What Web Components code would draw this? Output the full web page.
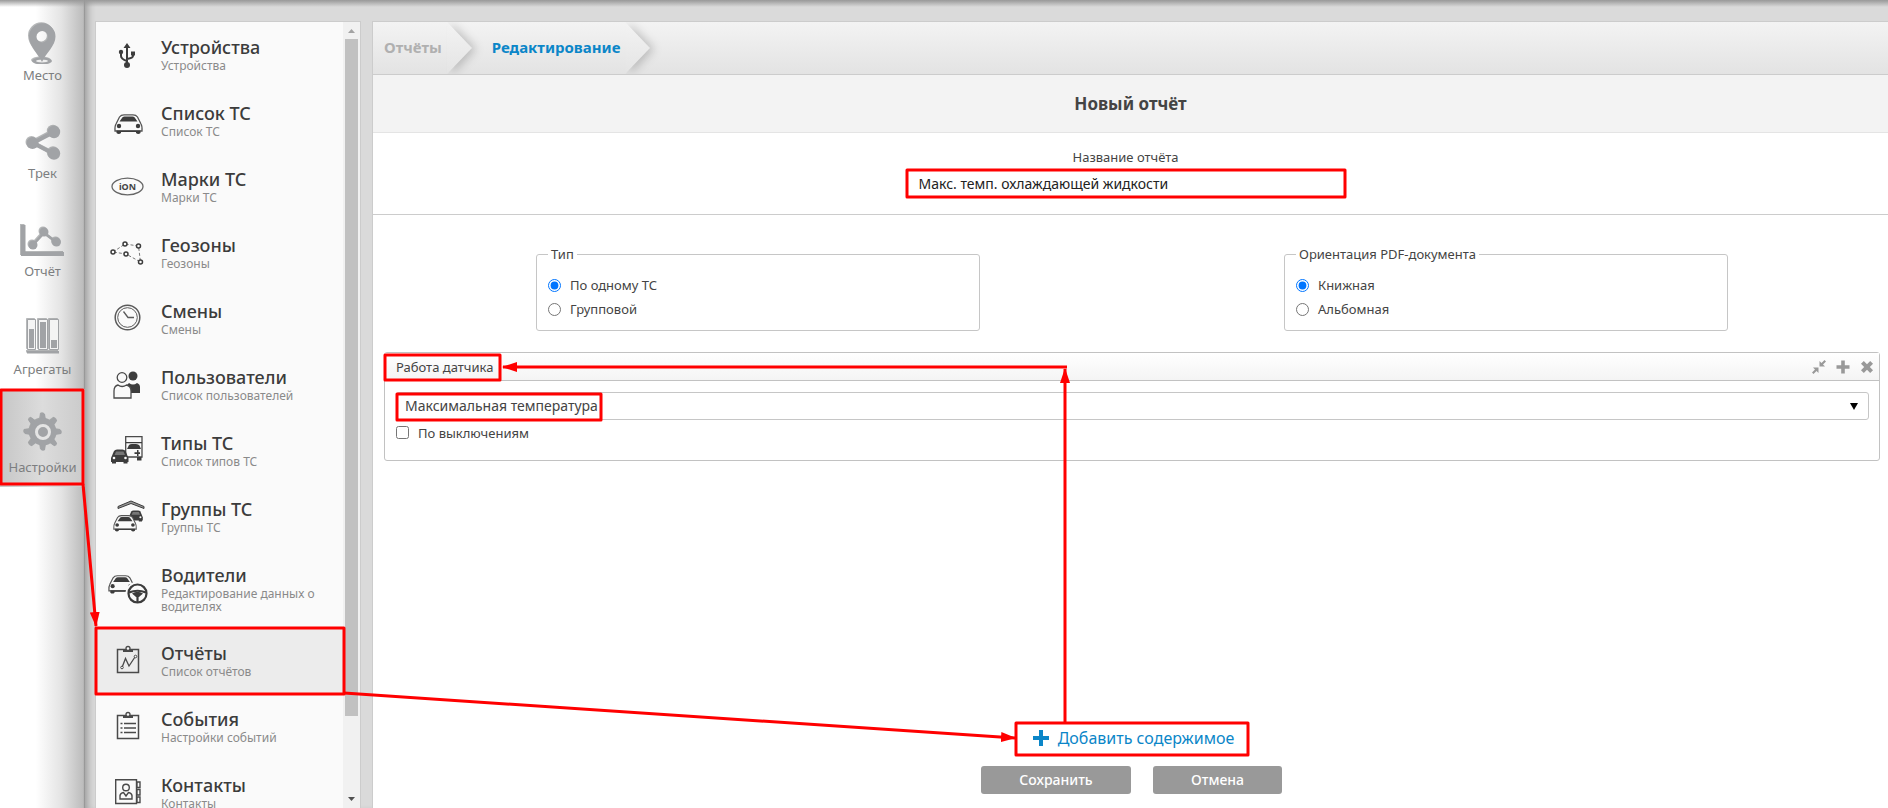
<!DOCTYPE html>
<html lang="ru">
<head>
<meta charset="utf-8">
<title>Новый отчёт</title>
<style>
  html, body { height: 100%; }
  body { margin: 0; font: 13px/18px "Noto Sans", "Open Sans", sans-serif; color: #444; }
</style>
</head>
<body>
<app-shell>
  <app-rail slot="rail">
    <rail-item icon="place">Место</rail-item>
    <rail-item icon="track">Трек</rail-item>
    <rail-item icon="chart">Отчёт</rail-item>
    <rail-item icon="units">Агрегаты</rail-item>
    <rail-item icon="gear" active>Настройки</rail-item>
  </app-rail>
  <side-menu slot="menu">
    <side-item icon="usb">Устройства<span slot="note">Устройства</span></side-item>
    <side-item icon="car">Список ТС<span slot="note">Список ТС</span></side-item>
    <side-item icon="brand">Марки ТС<span slot="note">Марки ТС</span></side-item>
    <side-item icon="geo">Геозоны<span slot="note">Геозоны</span></side-item>
    <side-item icon="clock">Смены<span slot="note">Смены</span></side-item>
    <side-item icon="users">Пользователи<span slot="note">Список пользователей</span></side-item>
    <side-item icon="types">Типы ТС<span slot="note">Список типов ТС</span></side-item>
    <side-item icon="groups">Группы ТС<span slot="note">Группы ТС</span></side-item>
    <side-item icon="drivers">Водители<span slot="note">Редактирование данных о водителях</span></side-item>
    <side-item icon="reports" active>Отчёты<span slot="note">Список отчётов</span></side-item>
    <side-item icon="events">События<span slot="note">Настройки событий</span></side-item>
    <side-item icon="contacts">Контакты<span slot="note">Контакты</span></side-item>
  </side-menu>
  <report-editor>
    <crumb-item slot="crumbs">Отчёты</crumb-item>
    <crumb-item slot="crumbs" current>Редактирование</crumb-item>
    <radio-group slot="options" name="kind" legend="Тип" options="По одному ТС|Групповой"></radio-group>
    <radio-group slot="options" name="page" legend="Ориентация PDF-документа" options="Книжная|Альбомная"></radio-group>
    <content-block slot="blocks">Работа датчика</content-block>
  </report-editor>
  <guide-marks slot="guide"></guide-marks>
</app-shell>

<script>
// A front-view car, drawn in a 29 x 20 box.
const car = '<path d="M2 10 5.500 3 Q7 .8 10 .8H19Q22 .8 23.500 3L27 10Q28.300 12 28 17H1Q.7 12 2 10Z" fill="#fafafa" stroke="#555" stroke-width="1.300"/><path d="M5.500 7.500 8.500 3.200Q9.200 2.400 10.500 2.400H18.500Q19.800 2.400 20.500 3.200L23.500 7.500Z" fill="#3c3c3c"/><circle cx="5" cy="12" r="2.200" fill="#3c3c3c"/><circle cx="24" cy="12" r="2.200" fill="#3c3c3c"/><path d="M2.500 16.500H7V19Q4.800 20.800 2.500 19ZM22 16.500H26.500V19Q24.200 20.800 22 19ZM4 16.500H25V18H4Z" fill="#3c3c3c"/>';
const darkCar = '<path d="M1 9 4 2Q5 .5 7 .5H12.500Q14.500 .5 15.500 2L18.500 9V13H1Z" fill="#3c3c3c"/><path d="M4.500 6 6 2.500H13.500L15 6Z" fill="#777"/><circle cx="4" cy="9" r="1.300" fill="#fafafa"/><circle cx="15.500" cy="9" r="1.300" fill="#fafafa"/><path d="M2 12H6V14.500H2ZM13.500 12H17.500V14.500H13.500Z" fill="#3c3c3c"/>';
const clip = '<path d="M11.500 15.500H32.500V38.500H11.500Z" fill="none" stroke="#4a4a4a" stroke-width="1.500"/><path d="M17 15H27V18H17Z" fill="#4a4a4a"/><circle cx="22" cy="14.500" r="2" fill="#fafafa" stroke="#4a4a4a" stroke-width="1.300"/>';
const toothed = Array.from({ length: 8 }, (_, i) => `<path d="M-3-12 -2-18Q0-19.500 2-18L3-12Z" transform="rotate(${i * 45})"/>`).join('');

const RAIL_ICONS = {
  place: '<g transform="translate(0 3)"><ellipse cx="21" cy="38" rx="10" ry="3.500" fill="#a1a3a6"/><ellipse cx="21" cy="38" rx="6" ry="1.500" fill="#eee"/><path fill-rule="evenodd" d="M21 39C17 30 8 23 8 13.500A13.200 13.200 0 0 1 34.500 13.500C34.500 23 25 30 21 39ZM21.200 8A5.700 5.700 0 1 0 21.200 19.400 5.700 5.700 0 0 0 21.200 8Z"/></g>',
  track: '<g transform="translate(0 3)"><path d="M12 22 33 11M12 22 33 33" fill="none" stroke="#a1a3a6" stroke-width="4"/><circle cx="11.500" cy="22" r="6"/><circle cx="33" cy="11" r="6.200"/><circle cx="33" cy="32.500" r="6.200"/></g>',
  chart: '<g transform="translate(0 2)"><path d="M0 7H4.500V34H43V38H0Z"/><path d="M12 27 23 15 35 24" fill="none" stroke="#a1a3a6" stroke-width="2.500"/><circle cx="12" cy="27" r="4.500"/><circle cx="23" cy="14" r="4.500"/><circle cx="35.500" cy="24" r="4.500"/></g>',
  units: '<g fill="#f4f4f4" stroke="#a1a3a6" stroke-width="1"><path d="M6.500 5.500H14.500V35.500H6.500ZM17.500 5.500H26.500V35.500H17.500ZM28.500 5.500H37.500V35.500H28.500Z"/></g><path d="M8 15H13V34H8ZM19 8H25V34H19ZM30 26H36V34H30ZM6 37H38V39.500H6Z"/>',
  gear: `<g transform="translate(22 20)">${toothed}<circle r="13.500"/><circle r="6.500" fill="none" stroke="#e4e4e4" stroke-width="3"/></g>`
};

const MENU_ICONS = {
  usb: '<g fill="none" stroke="#3c3c3c" stroke-width="2"><path d="M21 18V36M15 25V28Q15 31 21 33M27 25V28Q27 30 21 31"/></g><path d="M21 15 24.500 20H17.500ZM25 23.500H29V27.500H25Z" fill="#3c3c3c"/><circle cx="15" cy="24" r="2.200" fill="#3c3c3c"/><circle cx="21" cy="37" r="3" fill="#3c3c3c"/>',
  car: `<g transform="translate(8 20)">${car}</g>`,
  brand: '<ellipse cx="21.500" cy="26.500" rx="15.500" ry="8.300" fill="none" stroke="#666" stroke-width="1.300"/><text x="21.500" y="30" text-anchor="middle" font-size="9" font-weight="700" fill="#444">iON</text>',
  geo: '<path d="M7 26 19 18 32.500 20 34.500 36 20 28Z" fill="none" stroke="#777" stroke-width="1" stroke-dasharray="3 2"/><g fill="#fafafa" stroke="#3c3c3c" stroke-width="1.500"><circle cx="7" cy="26" r="2"/><circle cx="19" cy="18" r="2"/><circle cx="32.500" cy="20" r="2"/><circle cx="20" cy="28" r="2"/><circle cx="34.500" cy="36" r="2"/></g>',
  clock: '<g fill="none" stroke="#5a5a5a"><circle cx="21.500" cy="25.500" r="12.300" stroke-width="1.500"/><circle cx="21.500" cy="25.500" r="9.800"/><path d="M17.500 19.500 22 25.500H28" stroke-width="1.300"/></g>',
  users: '<circle cx="27" cy="18" r="4.500" fill="#3c3c3c"/><path d="M23 25Q27 28 31 25Q34 26 34 29V35H21V27Z" fill="#3c3c3c"/><circle cx="16" cy="19.500" r="4.800" fill="#fafafa" stroke="#4a4a4a" stroke-width="1.300"/><path d="M8 40V33Q8 28 12 27Q16 30 20.500 27Q25 28 25 33V40Z" fill="#fafafa" stroke="#4a4a4a" stroke-width="1.300"/>',
  types: `<path d="M19.700 12.700H36V33H19.700Z" fill="#fafafa" stroke="#4a4a4a" stroke-width="1.300"/><path d="M20 18H36V19.200H20ZM21 25 23 21Q24 20 26 20H30Q32.500 20 33.500 21.500L35 25ZM28.500 28.200H31V26H32.500V28.200H34V30H32.500V32H31V30H28.500ZM31 33H35.500V36.500H31Z" fill="#3c3c3c"/><g transform="translate(4 25)">${darkCar}</g>`,
  groups: `<path d="M12 16.500 25 11 38 16.500V18.500L25 13.500 12 18.500Z" fill="#999" stroke="#3c3c3c"/><g transform="translate(22 20) scale(.8)">${darkCar}</g><g transform="translate(7 25) scale(.83)">${car}</g>`,
  drivers: `<g transform="translate(2 19) scale(.93)">${car}</g><circle cx="31.500" cy="37.500" r="12" fill="#fafafa"/><g fill="none" stroke="#3c3c3c" stroke-width="2.200"><circle cx="31.500" cy="37.500" r="9"/><path d="M23 36.500Q31.500 33 40 36.500M31.500 37V46"/></g><path d="M26 37.500Q31.500 34 37 37.500L33 41H30Z" fill="#3c3c3c"/>`,
  reports: clip + '<path d="M16 33.500 19.500 24.500 23 32 29 23" fill="none" stroke="#4a4a4a" stroke-width="1.300"/><g fill="#fafafa" stroke="#4a4a4a"><circle cx="16" cy="33.500" r="1.300"/><circle cx="29.500" cy="22.500" r="1.300"/></g>',
  events: clip + '<path d="M14.500 23.500H16.500M18 23.500H30M14.500 28H16.500M18 28H30M14.500 32.500H16.500M18 32.500H30" stroke="#4a4a4a" stroke-width="1.300"/>',
  contacts: '<g fill="none" stroke="#4a4a4a" stroke-width="1.400"><path d="M9.700 13.700H30.500V37.500H9.700ZM31 16H34V21.500H31ZM31 23.500H34V29H31ZM31 31H34V36.500H31Z"/><circle cx="20" cy="21.500" r="3.300"/><path d="M14 33V29.500Q14.500 27 17.500 26.500L20 30 22.500 26.500Q25.500 27 26 29.500V33Z"/></g>'
};

function element(name, markup, setup) {
  const template = document.createElement('template');
  template.innerHTML = markup;
  customElements.define(name, class extends HTMLElement {
    constructor() {
      super();
      this.attachShadow({ mode: 'open' }).append(template.content.cloneNode(true));
    }
    connectedCallback() { if (setup) setup(this, this.shadowRoot); }
  });
}

element('app-shell', `
<style>
  :host { display: flex; position: relative; height: 100vh; overflow: hidden; background: #dadada; }
  .shade { position: absolute; inset: 0 0 auto; height: 7px; background: linear-gradient(#999, #9990); }
  .work { flex: 1; min-width: 0; display: flex; gap: 11px; padding: 21px 0 0 10px; box-shadow: inset 8px 0 8px -6px #0005; }
  ::slotted(report-editor) { flex: 1; min-width: 0; }
</style>
<slot name="rail"></slot>
<div class="work"><slot name="menu"></slot><slot></slot></div>
<div class="shade"></div>
<slot name="guide"></slot>`);

element('app-rail', `
<style>
  :host { display: block; flex: none; width: 85px; background: linear-gradient(90deg, #fff 42%, #e4e4e4 72%, #bcbcbc 98%, #8a8a8a); }
</style>
<nav><slot></slot></nav>`);

element('rail-item', `
<style>
  :host { display: block; color: #7c7e80; }
  :host(:first-child) a { height: 95px; }
  a { display: flex; flex-direction: column; align-items: center; justify-content: flex-end; gap: 2px; box-sizing: border-box; height: 98px; padding-bottom: 11px; color: inherit; text-decoration: none; }
  :host([active]) { background: linear-gradient(90deg, #c6c6c6, #dcdcdc 50%, #cacaca); }
  svg { fill: #a1a3a6; filter: drop-shadow(-1px -1px 0 #77797c88); }
</style>
<a href="#"><svg width="44" height="44" viewBox="0 0 44 44" aria-hidden="true"></svg><span><slot></slot></span></a>`,
(host, root) => { root.querySelector('svg').innerHTML = RAIL_ICONS[host.getAttribute('icon')]; });

element('side-menu', `
<style>
  :host { display: flex; box-sizing: border-box; flex: none; width: 266px; border: 1px solid #ccc; border-bottom: 0; background: #fafafa; overflow: hidden; }
  nav { flex: 1; }
  .bar { display: flex; flex-direction: column; align-items: center; width: 17px; background: #f1f1f1; }
  .track { flex: 1; width: 13px; }
  .thumb { height: 90%; background: #c1c1c1; }
</style>
<nav><slot></slot></nav>
<div class="bar" aria-hidden="true">
  <svg width="17" height="17"><path d="M5 11 8.500 7 12 11Z" fill="#a3a3a3"/></svg>
  <div class="track"><div class="thumb"></div></div>
  <svg width="17" height="17"><path d="M5 6 8.500 10 12 6Z" fill="#505050"/></svg>
</div>`);

element('side-item', `
<style>
  :host { display: block; }
  :host([active]) { background: #ececec; }
  a { display: flex; gap: 13px; box-sizing: border-box; min-height: 66px; padding: 0 16px 0 10px; color: #3c3c3c; text-decoration: none; }
  svg { flex: none; margin-top: 6px; }
  .text { padding: 13px 0 15px; }
  .title { font-size: 18px; line-height: 24px; font-weight: 500; }
  .note { font-size: 12px; line-height: 13px; color: #8a8a8a; }
</style>
<a href="#"><svg width="42" height="54" viewBox="0 0 42 54" aria-hidden="true"></svg>
<div class="text"><div class="title"><slot></slot></div><div class="note"><slot name="note"></slot></div></div></a>`,
(host, root) => { root.querySelector('svg').innerHTML = MENU_ICONS[host.getAttribute('icon')]; });

element('crumb-item', `
<style>
  :host { display: flex; color: #b0b0b0; font-size: 15px; font-weight: 700; }
  :host([current]) { color: #0b86c8; }
  a { display: flex; align-items: center; padding: 0 5px 2px 11px; color: inherit; text-decoration: none; }
  :host([current]) a { padding-left: 19px; }
  svg { overflow: visible; filter: drop-shadow(4px 1px 5px #0003); clip-path: inset(0 -16px 0 0); }
</style>
<a href="#"><slot></slot></a>
<svg width="26" height="52" viewBox="0 0 26 52" aria-hidden="true"><defs><linearGradient id="g" x2="0" y2="1"><stop stop-color="#f3f3f3"/><stop offset="1" stop-color="#e4e4e4"/></linearGradient></defs><path d="M0 0 25 26 0 52Z" fill="url(#g)"/></svg>`);

element('radio-group', `
<style>
  :host { display: block; width: 444px; }
  fieldset { margin: 0; padding: 10px 11px 9px; border: 1px solid #c6c6c6; border-radius: 3px; }
  legend { padding: 0 3px; }
  label { display: flex; align-items: center; gap: 9px; width: max-content; height: 24px; }
  input { width: 13px; height: 13px; margin: 0; accent-color: #0075ff; }
</style>
<fieldset><legend></legend></fieldset>`,
(host, root) => {
  root.querySelector('legend').textContent = host.getAttribute('legend');
  host.getAttribute('options').split('|').forEach((text, i) => {
    const label = document.createElement('label');
    const input = document.createElement('input');
    input.type = 'radio';
    input.name = host.getAttribute('name');
    input.checked = i === 0;
    label.append(input, text);
    root.querySelector('fieldset').append(label);
  });
});

element('content-block', `
<style>
  :host { display: block; border: 1px solid #c2c2c2; border-radius: 3px; }
  header { display: flex; align-items: center; justify-content: space-between; height: 27px; padding: 0 4px 0 11px; border-bottom: 1px solid #c2c2c2; background: linear-gradient(#fff, #f4f4f4); }
  .tools { display: flex; gap: 8px; }
  button { display: flex; padding: 0; border: 0; background: none; }
  .body { padding: 11px 10px 15px 11px; }
  .pick { display: grid; align-items: center; }
  select, .pick svg { grid-area: 1 / 1; }
  .pick svg { justify-self: end; margin-right: 10px; pointer-events: none; }
  select { appearance: none; width: 100%; height: 28px; padding: 0 8px; border: 1px solid #c6c6c6; border-radius: 3px; background: #fff; color: #444; font: inherit; font-size: 14px; }
  label { display: flex; align-items: center; gap: 9px; width: max-content; height: 25px; }
  input { width: 13px; height: 13px; margin: 0; }
</style>
<header><span><slot></slot></span>
<div class="tools">
  <button type="button" aria-label="Свернуть"><svg width="16" height="16" viewBox="0 0 16 16" fill="#999"><path d="M8.500 7.500V2L10.500 4 13.500 1 15 2.500 12 5.500 14 7.500ZM7.500 8.500V14L5.500 12 2.500 15 1 13.500 4 10.500 2 8.500Z"/></svg></button>
  <button type="button" aria-label="Добавить"><svg width="16" height="16" viewBox="0 0 16 16" fill="#999"><path d="M6.200 1.500H9.800V6.200H14.500V9.800H9.800V14.500H6.200V9.800H1.500V6.200H6.200Z"/></svg></button>
  <button type="button" aria-label="Удалить"><svg width="16" height="16" viewBox="0 0 16 16" fill="#999"><path transform="rotate(45 8 8)" d="M6 1.500H10V6H14.500V10H10V14.500H6V10H1.500V6H6Z"/></svg></button>
</div></header>
<div class="body">
  <div class="pick"><select aria-label="Показатель"><option>Максимальная температура</option></select><svg width="10" height="8"><path d="M1 1H9L5 8Z"/></svg></div>
  <label><input type="checkbox">По выключениям</label>
</div>`);

element('report-editor', `
<style>
  :host { display: flex; flex-direction: column; box-sizing: border-box; border: solid #ccc; border-width: 1px 0 0 1px; background: #fff; }
  .crumbs { display: flex; height: 52px; border-bottom: 1px solid #ccc; background: linear-gradient(#f3f3f3, #e3e3e3); }
  h1 { margin: 0; padding: 17px 0 16px; border-bottom: 1px solid #e4e4e4; background: #f3f3f3; text-align: center; font-size: 17px; line-height: 24px; }
  .name { display: flex; flex-direction: column; align-items: center; padding: 14px 10px 16px 0; border-bottom: 1px solid #ccc; }
  .name label { line-height: 20px; }
  .name input { box-sizing: border-box; width: 438px; height: 29px; margin-top: 2px; padding: 0 11px; border: 1px solid #c6c6c6; color: #222; font: inherit; font-size: 14px; }
  .options { display: flex; justify-content: space-around; padding: 30px 8px 21px 11px; }
  .blocks { padding: 0 8px 0 11px; }
  footer { display: flex; flex-direction: column; align-items: center; gap: 11px; margin-top: auto; padding: 0 0 14px 2px; }
  button { border: 0; font: inherit; }
  .add { display: flex; align-items: center; gap: 9px; height: 34px; padding: 0 0 0 4px; background: none; color: #0b86c8; font-size: 16px; }
  .row { display: flex; gap: 22px; }
  .row button { height: 28px; border-radius: 3px; background: #999; color: #fff; font-size: 14px; font-weight: 500; }
  .save { width: 150px; }
  .cancel { width: 129px; }
</style>
<nav class="crumbs"><slot name="crumbs"></slot></nav>
<h1>Новый отчёт</h1>
<div class="name"><label for="title">Название отчёта</label><input id="title" type="text" value="Макс. темп. охлаждающей жидкости"></div>
<div class="options"><slot name="options"></slot></div>
<div class="blocks"><slot name="blocks"></slot></div>
<footer>
  <button class="add" type="button"><svg width="16" height="16" viewBox="0 0 16 16" fill="#0b86c8" aria-hidden="true"><path d="M6 0H10V6H16V10H10V16H6V10H0V6H6Z"/></svg>Добавить содержимое</button>
  <div class="row"><button class="save" type="button">Сохранить</button><button class="cancel" type="button">Отмена</button></div>
</footer>`);

// Red frames and arrows that lead the reader from step to step.
element('guide-marks', `
<style>
  :host { position: absolute; inset: 0; pointer-events: none; }
  svg { display: block; width: 100%; height: 100%; }
</style>
<svg aria-hidden="true">
  <defs><marker id="tip" viewBox="0 0 15 10" refX="14" refY="5" markerWidth="15" markerHeight="10" markerUnits="userSpaceOnUse" orient="auto"><path d="M0 0 15 5 0 10Z" fill="red"/></marker></defs>
  <g fill="none" stroke="red" stroke-width="3" stroke-linejoin="round">
    <rect x="1" y="390" width="82" height="94"/>
    <rect x="96" y="628" width="248" height="66"/>
    <rect x="907" y="170" width="438" height="27"/>
    <rect x="385" y="355" width="115" height="25"/>
    <rect x="397" y="394" width="204" height="26"/>
    <rect x="1016" y="723" width="232" height="32"/>
    <path d="M83 484 96 626" marker-end="url(#tip)"/>
    <path d="M344 693 1015 738" marker-end="url(#tip)"/>
    <path d="M1065 722V369" marker-end="url(#tip)"/>
    <path d="M1067 367H503" marker-end="url(#tip)"/>
  </g>
</svg>`);
</script>
</body>
</html>
